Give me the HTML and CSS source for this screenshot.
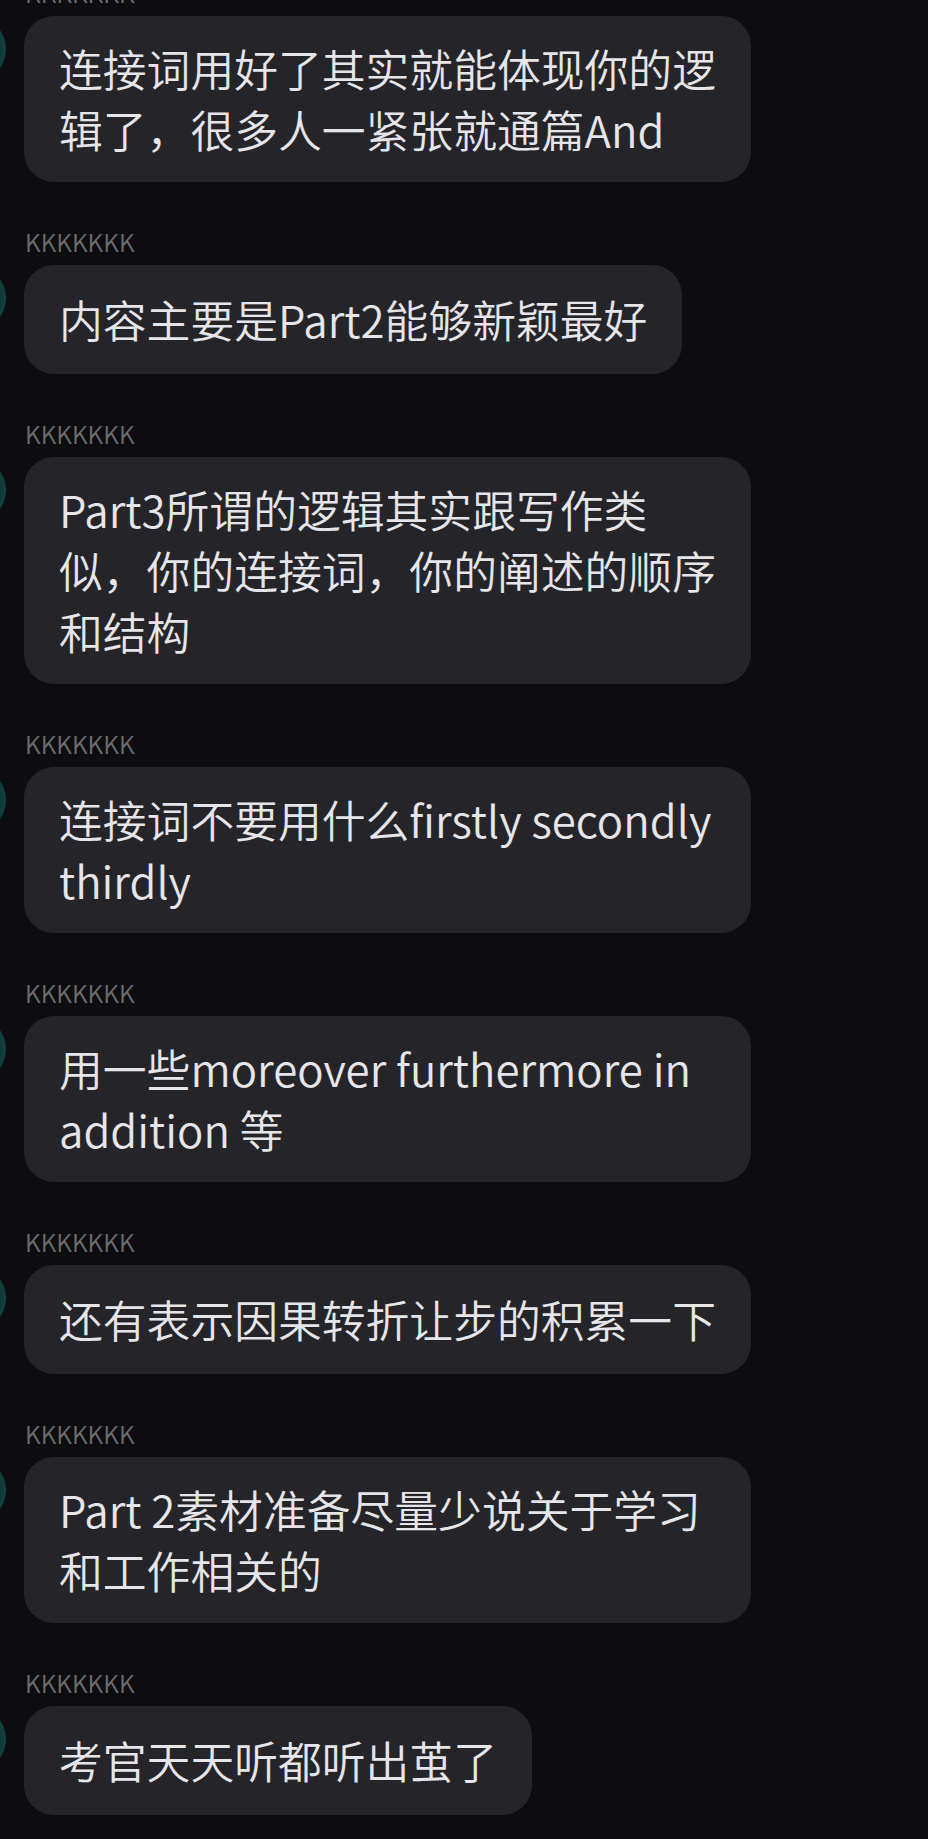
FILE: index.html
```html
<!DOCTYPE html>
<html lang="zh-CN">
<head>
<meta charset="utf-8">
<title>Chat</title>
<link rel="stylesheet" href="styles.css">
</head>
<body>
<div class="chat">
  <div class="msg">
    <div class="avatar"></div>
    <div class="body">
      <div class="name">KKKKKKK</div>
      <div class="bubble wide">连接词用好了其实就能体现你的逻<br>辑了，很多人一紧张就通篇And</div>
    </div>
  </div>
  <div class="msg">
    <div class="avatar"></div>
    <div class="body">
      <div class="name">KKKKKKK</div>
      <div class="bubble">内容主要是Part2能够新颖最好</div>
    </div>
  </div>
  <div class="msg">
    <div class="avatar"></div>
    <div class="body">
      <div class="name">KKKKKKK</div>
      <div class="bubble wide">Part3所谓的逻辑其实跟写作类<br>似，你的连接词，你的阐述的顺序<br>和结构</div>
    </div>
  </div>
  <div class="msg">
    <div class="avatar"></div>
    <div class="body">
      <div class="name">KKKKKKK</div>
      <div class="bubble wide">连接词不要用什么firstly secondly<br>thirdly</div>
    </div>
  </div>
  <div class="msg">
    <div class="avatar"></div>
    <div class="body">
      <div class="name">KKKKKKK</div>
      <div class="bubble wide">用一些moreover furthermore in<br>addition 等</div>
    </div>
  </div>
  <div class="msg">
    <div class="avatar"></div>
    <div class="body">
      <div class="name">KKKKKKK</div>
      <div class="bubble">还有表示因果转折让步的积累一下</div>
    </div>
  </div>
  <div class="msg">
    <div class="avatar"></div>
    <div class="body">
      <div class="name">KKKKKKK</div>
      <div class="bubble wide">Part 2素材准备尽量少说关于学习<br>和工作相关的</div>
    </div>
  </div>
  <div class="msg">
    <div class="avatar"></div>
    <div class="body">
      <div class="name">KKKKKKK</div>
      <div class="bubble">考官天天听都听出茧了</div>
    </div>
  </div>
</div>
</body>
</html>
```

FILE: styles.css
```css
html, body {
  margin: 0;
  padding: 0;
  background: #0d0d10;
}

body {
  font-family: "Noto Sans CJK SC", "Noto Sans", sans-serif;
  overflow: hidden;
}

.chat {
  display: flex;
  flex-direction: column;
  gap: 45px;
  margin-top: -22px;
}

.msg {
  display: flex;
  align-items: flex-start;
}

.avatar {
  flex: none;
  width: 64px;
  height: 64px;
  margin-left: -58px;
  margin-right: 18px;
  margin-top: 39px;
  border-radius: 50%;
  background: radial-gradient(circle at 30% 50%, #0c1c1b 0%, #0f2b29 60%, #14504a 92%, #0d1a19 100%);
}

.body {
  display: flex;
  flex-direction: column;
  align-items: flex-start;
}

.name {
  font-size: 24.5px;
  line-height: 30px;
  color: #6c6c6e;
  margin-bottom: 8px;
  padding-left: 1px;
  font-weight: 350;
}

.bubble {
  box-sizing: border-box;
  display: flex;
  align-items: center;
  min-height: 109px;
  max-width: 727px;
  background: #252529;
  color: #e6e6ea;
  border-radius: 30px;
  padding: 22px 35px;
  font-size: 43.8px;
  line-height: 61px;
  font-weight: 350;
  white-space: nowrap;
}

.bubble.wide {
  display: block;
  width: 727px;
}
```
